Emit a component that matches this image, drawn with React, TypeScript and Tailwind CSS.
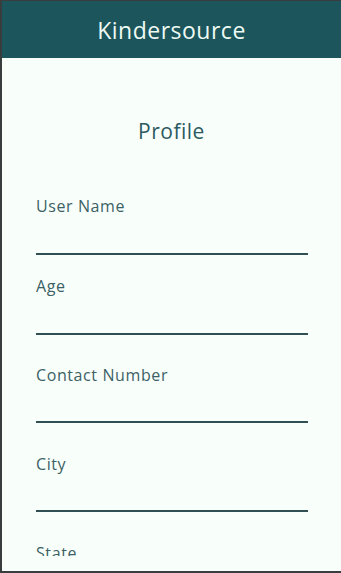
const fields = [
  { label: "User Name", mt: "mt-[49px]", h: "h-[37px]" },
  { label: "Age", mt: "mt-[19px]", h: "h-[37px]" },
  { label: "Contact Number", mt: "mt-[28px]", h: "h-[36px]" },
  { label: "City", mt: "mt-[29px]", h: "h-[36px]" },
  { label: "State", mt: "mt-[29px]", h: "h-[36px]" },
];

export default function App() {
  return (
    <div
      className="flex h-[573px] w-[341px] flex-col overflow-hidden border-t border-b-2 border-l-2 border-[#3a3d3d] bg-[#f8fffa]"
      style={{ fontFamily: '"Open Sans", "Noto Sans", sans-serif' }}
    >
      {/* Top bar */}
      <header className="flex h-[57px] shrink-0 items-center justify-center bg-[#1c555b] pt-[2px]">
        <h1 className="text-[23px] tracking-[0.5px] text-[#eefaf4]">Kindersource</h1>
      </header>

      {/* Profile form */}
      <main className="h-[498px] shrink-0 overflow-hidden">
        <h2 className="pt-[59px] text-center text-[21px] leading-7 tracking-[0.5px] text-[#2d5a60]">Profile</h2>
        <form className="pl-[34px] pr-[33px]">
          {fields.map((f) => (
            <div key={f.label} className={f.mt}>
              <label className="block text-[16px] leading-6 tracking-[0.6px] text-[#3c6166]">
                {f.label}
              </label>
              <input
                type="text"
                className={`block w-full border-b-2 border-[#2f4f52] bg-transparent outline-none ${f.h}`}
              />
            </div>
          ))}
        </form>
      </main>
    </div>
  );
}
